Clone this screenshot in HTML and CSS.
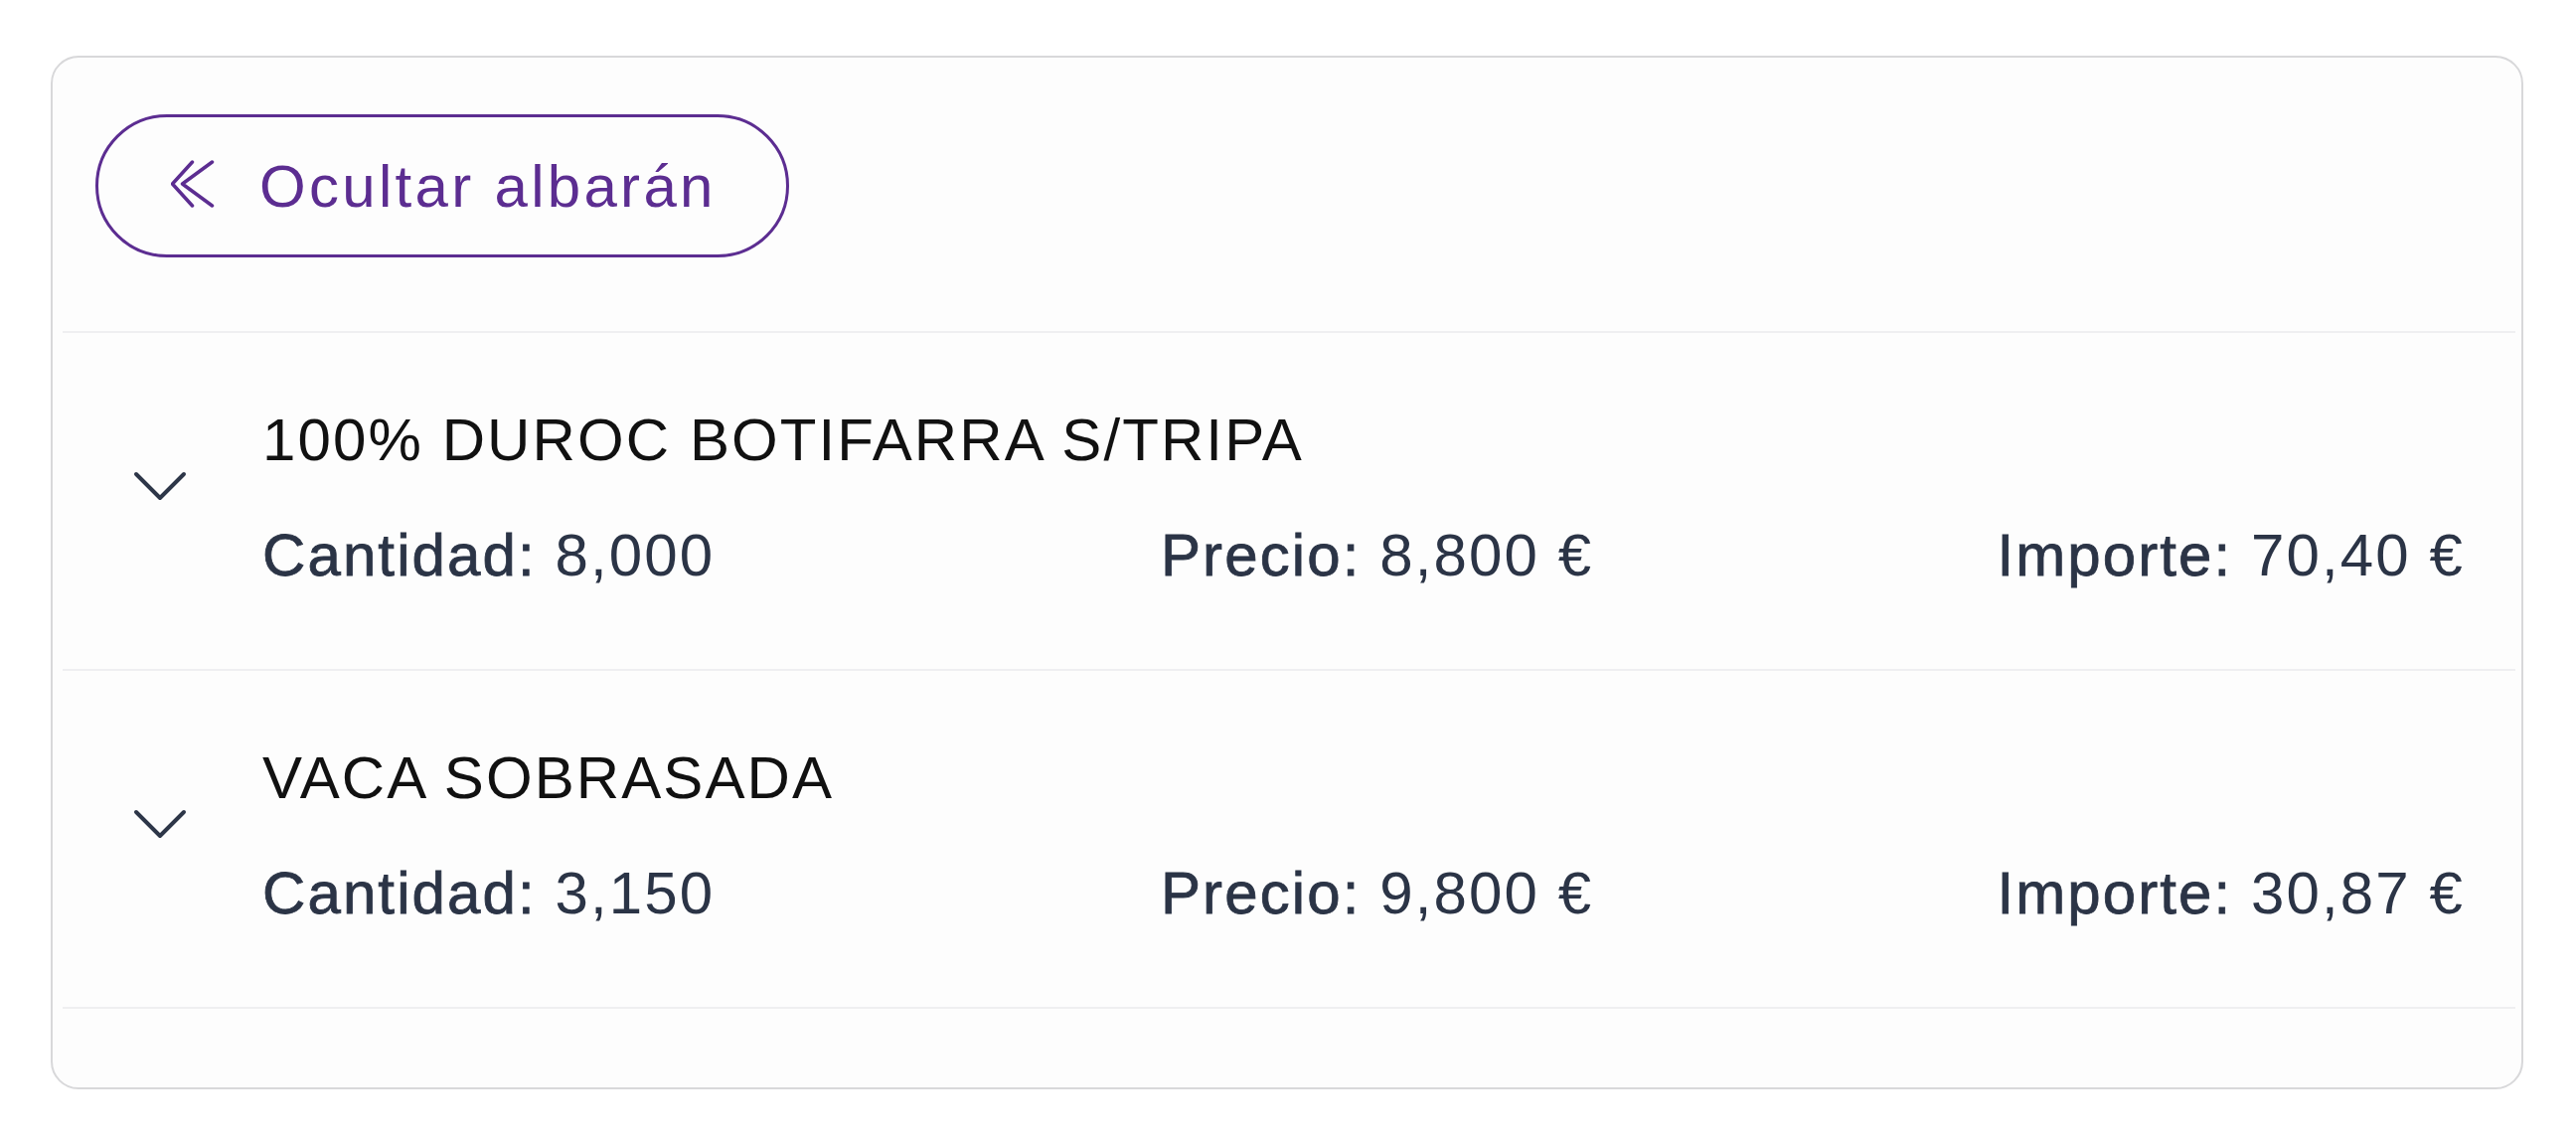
FILE: index.html
```html
<!DOCTYPE html>
<html lang="es">
<head>
  <meta charset="UTF-8" />
  <meta name="viewport" content="width=device-width, initial-scale=1.0" />
  <title>Albarán</title>
  <link rel="stylesheet" href="styles.css">
</head>
<body>
  <div class="panel">
    <div class="panel-head">
      <button class="toggle-btn" type="button">
        <svg class="icon-double" width="44" height="48" viewBox="0 0 44 48" fill="none" stroke="currentColor" stroke-width="3.5" stroke-linecap="round" stroke-linejoin="round">
          <polyline points="21.5,2 1.5,24 21.5,46" />
          <polyline points="41.5,2 11.5,24 41.5,46" />
        </svg>
        <span>Ocultar albarán</span>
      </button>
    </div>

    <div class="lines">
      <div class="line">
        <svg class="chevron" width="56" height="32" viewBox="0 0 56 32" fill="none" stroke="currentColor" stroke-width="4" stroke-linecap="round" stroke-linejoin="round">
          <polyline points="4,4 28,28 52,4" />
        </svg>
        <div class="line-body">
          <div class="line-title">100% DUROC BOTIFARRA S/TRIPA</div>
          <div class="line-data">
            <span><b>Cantidad:</b> 8,000</span>
            <span><b>Precio:</b> 8,800 €</span>
            <span class="amount"><b>Importe:</b> 70,40 €</span>
          </div>
        </div>
      </div>

      <div class="line">
        <svg class="chevron" width="56" height="32" viewBox="0 0 56 32" fill="none" stroke="currentColor" stroke-width="4" stroke-linecap="round" stroke-linejoin="round">
          <polyline points="4,4 28,28 52,4" />
        </svg>
        <div class="line-body">
          <div class="line-title">VACA SOBRASADA</div>
          <div class="line-data">
            <span><b>Cantidad:</b> 3,150</span>
            <span><b>Precio:</b> 9,800 €</span>
            <span class="amount"><b>Importe:</b> 30,87 €</span>
          </div>
        </div>
      </div>
    </div>
  </div>
</body>
</html>
```

FILE: styles.css
```css
body {
  margin: 0;
  background: #ffffff;
  font-family: 'Liberation Sans', Arial, sans-serif;
}

.panel {
  box-sizing: border-box;
  width: 2488px;
  margin: 56px 0 0 51px;
  padding-bottom: 79px;
  background: #fdfdfd;
  border: 2px solid #d8d8da;
  border-radius: 28px;
}

.panel-head {
  padding: 57px 0 74px 43px;
}

.toggle-btn {
  display: inline-flex;
  align-items: center;
  gap: 45px;
  height: 144px;
  padding: 0 70px 0 73px;
  border: 3px solid #5c2d91;
  border-radius: 999px;
  background: transparent;
  color: #5c2d91;
  font-family: inherit;
  font-size: 60px;
  letter-spacing: 0.055em;
  cursor: pointer;
}

.icon-double {
  margin-bottom: 4px;
}

.lines {
  margin: 0 6px 0 10px;
}

.line {
  display: flex;
  align-items: center;
  gap: 75px;
  padding: 72px 51px 78px 70px;
  border-top: 2px solid #efeff1;
}

.line:last-child {
  border-bottom: 2px solid #efeff1;
}

.chevron {
  flex-shrink: 0;
  margin-bottom: 24px;
  color: #2d3648;
}

.line-body {
  flex: 1;
  font-size: 60px;
  line-height: 1.2;
  letter-spacing: 0.035em;
}

.line-title {
  color: #111111;
}

.line-data {
  display: grid;
  grid-template-columns: 904px 1fr auto;
  margin-top: 44px;
  color: #2b3446;
}

.line-data b {
  font-weight: normal;
  -webkit-text-stroke: 0.8px #2b3446;
}
```
